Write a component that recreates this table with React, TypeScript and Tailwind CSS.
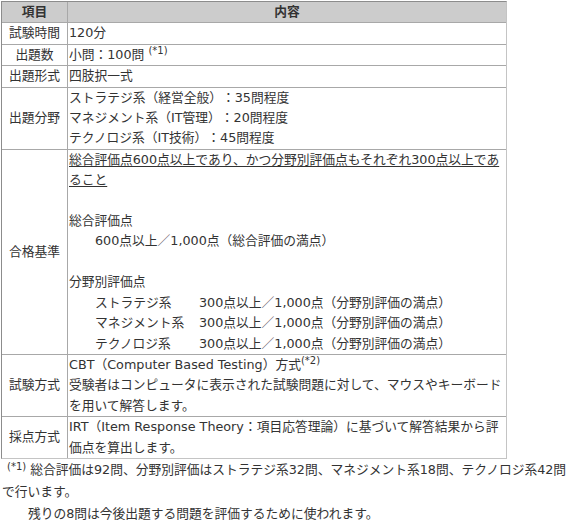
const leftCell =
  "flex items-center justify-center border-r border-b border-[#a8a8a8] whitespace-nowrap"
const rightCell = "border-b border-[#a8a8a8] pl-px"

function Sup({ children, className = "" }: { children: React.ReactNode; className?: string }) {
  return (
    <sup className={`text-[10px] leading-none align-top relative top-[1px] ${className}`}>{children}</sup>
  )
}

const fields = [
  "ストラテジ系（経営全般）：35問程度",
  "マネジメント系（IT管理）：20問程度",
  "テクノロジ系（IT技術）：45問程度",
]

const perField = [
  ["ストラテジ系", "300点以上／1,000点（分野別評価の満点）"],
  ["マネジメント系", "300点以上／1,000点（分野別評価の満点）"],
  ["テクノロジ系", "300点以上／1,000点（分野別評価の満点）"],
]

export default function App() {
  return (
    <div className="w-[586px] h-[520px] bg-white pt-px pl-px text-[#333] text-[12.75px] [text-spacing-trim:space-all] font-['DejaVu_Sans','Noto_Sans_CJK_JP',sans-serif]">
      <div className="w-[506px] border border-t-[#8c8c8c] border-l-[#8c8c8c] border-r-[#c4c4c4] border-b-[#c4c4c4]">
        <div className="grid grid-cols-[66px_1fr] leading-[20.4px]">
          {/* header */}
          <div className={`${leftCell} bg-[#cccccc] font-bold`}>項目</div>
          <div className="border-b border-[#a8a8a8] bg-[#cccccc] text-center font-bold">内容</div>

          <div className={leftCell}>試験時間</div>
          <div className={rightCell}>120分</div>

          <div className={leftCell}>出題数</div>
          <div className={rightCell}>
            小問：100問 <Sup>(*1)</Sup>
          </div>

          <div className={leftCell}>出題形式</div>
          <div className={rightCell}>四肢択一式</div>

          <div className={leftCell}>出題分野</div>
          <div className={rightCell}>
            {fields.map((f) => (
              <div key={f}>{f}</div>
            ))}
          </div>

          <div className={leftCell}>合格基準</div>
          <div className={`${rightCell} pr-px`}>
            <p className="underline underline-offset-2">
              総合評価点600点以上であり、かつ分野別評価点もそれぞれ300点以上であること
            </p>
            <p>&nbsp;</p>
            <p>総合評価点</p>
            <p className="pl-[26px]">600点以上／1,000点（総合評価の満点）</p>
            <p>&nbsp;</p>
            <p>分野別評価点</p>
            {perField.map(([name, score]) => (
              <div key={name} className="flex pl-[26px]">
                <span className="w-[104px] shrink-0">{name}</span>
                <span>{score}</span>
              </div>
            ))}
          </div>

          <div className={leftCell}>試験方式</div>
          <div className={`${rightCell} pr-px`}>
            <p>
              CBT（Computer Based Testing）方式<Sup>(*2)</Sup>
            </p>
            <p>受験者はコンピュータに表示された試験問題に対して、マウスやキーボードを用いて解答します。</p>
          </div>

          <div className="flex items-center justify-center border-r border-[#a8a8a8] whitespace-nowrap">採点方式</div>
          <div className="pl-px pr-px">
            IRT（Item Response Theory：項目応答理論）に基づいて解答結果から評価点を算出します。
          </div>
        </div>
      </div>

      <div className="w-[574px] leading-[22px] pl-px">
        <p>
          <Sup className="ml-[5px] top-[3px]">(*1)</Sup> 総合評価は92問、分野別評価はストラテジ系32問、マネジメント系18問、テクノロジ系42問で行います。
        </p>
        <p className="pl-[26px]">残りの8問は今後出題する問題を評価するために使われます。</p>
      </div>
    </div>
  )
}
